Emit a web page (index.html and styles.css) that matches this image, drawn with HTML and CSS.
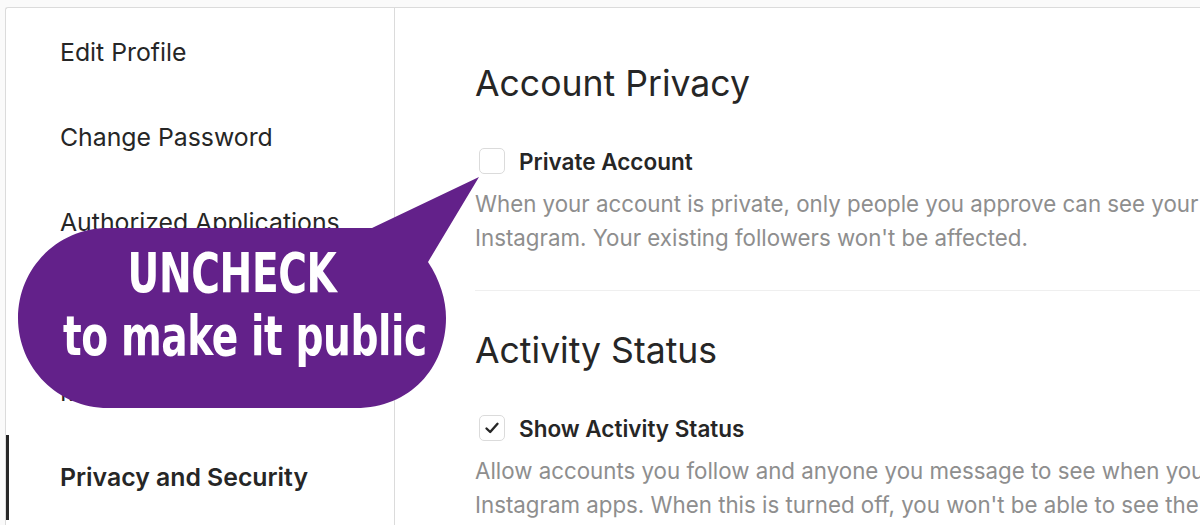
FILE: index.html
```html
<!DOCTYPE html>
<html>
<head>
    <meta charset="UTF-8">
    <title>Privacy and Security</title>
    <link rel="stylesheet" href="styles.css">
</head>
<body>
    <div class="page">
        <div class="card">
            <ul class="side">
                <li><a href="#">Edit Profile</a></li>
                <li><a href="#">Change Password</a></li>
                <li><a href="#">Authorized Applications</a></li>
                <li><a href="#">Email and SMS</a></li>
                <li><a href="#">Manage Contacts</a></li>
                <li><a href="#" class="active">Privacy and Security</a></li>
            </ul>
            <div class="main">
                <div class="section">
                    <h2>Account Privacy</h2>
                    <label class="check-row">
                        <span class="box"></span>
                        <span class="check-label">Private Account</span>
                    </label>
                    <p class="desc">When your account is private, only people you approve can see your photos and videos on Instagram. Your existing followers won't be affected.</p>
                </div>
                <div class="section">
                    <h2>Activity Status</h2>
                    <label class="check-row">
                        <span class="box checked">
                            <svg width="16" height="16" viewBox="0 0 16 16"><path d="M2.5 8.5 L6.2 12 L13.5 3.8" fill="none" stroke="#262626" stroke-width="2.4" stroke-linecap="round" stroke-linejoin="round"/></svg>
                        </span>
                        <span class="check-label">Show Activity Status</span>
                    </label>
                    <p class="desc">Allow accounts you follow and anyone you message to see when you were last active on Instagram apps. When this is turned off, you won't be able to see the activity status of other accounts.</p>
                </div>
            </div>
        </div>

        <!-- callout over the sidebar -->
        <div class="callout">
            <svg class="bubble" width="500" height="420" viewBox="0 0 500 420">
                <path d="M108 228 L372 228 L479 177 L428 262 C440 280 446 300 446 318 C446 368 410 408 356 408 L108 408 C58 408 18 368 18 318 C18 268 58 228 108 228 Z" fill="#63218a"/>
            </svg>
            <div class="callout-text">
                <div class="big">UNCHECK</div>
                <div class="big">to make it public</div>
            </div>
        </div>
    </div>
</body>
</html>
```

FILE: styles.css
```css
body {
    margin: 0;
    padding: 0;
    background-color: #fafafa;
    font-family: Inter, "Liberation Sans", Arial, sans-serif;
    color: #262626;
    overflow: hidden;
}

.page {
    position: relative;
    height: 525px;
    padding-top: 7px;
    box-sizing: border-box;
    overflow: hidden;
}

.card {
    display: flex;
    margin-left: 5px;
    height: 520px;
    background-color: #fff;
    border: 1px solid #dbdbdb;
    border-right: none;
    border-radius: 3px 0 0 0;
    overflow: hidden;
}

/* left menu */
.side {
    list-style: none;
    margin: 0;
    padding: 2px 0 0 0;
    width: 388px;
    flex-shrink: 0;
    border-right: 1px solid #dbdbdb;
}

.side a {
    display: block;
    padding: 29px 0 29px 51px;
    border-left: 3px solid transparent;
    font-size: 24.8px;
    line-height: 27px;
    color: #262626;
    text-decoration: none;
    white-space: nowrap;
}

.side a.active {
    border-left-color: #262626;
    font-weight: 600;
}

/* settings column */
.main {
    flex: 1;
    padding: 54px 0 0 80px;
    min-width: 0;
}

.section {
    padding-bottom: 35px;
    border-bottom: 1px solid #efefef;
    margin-bottom: 38px;
}

h2 {
    margin: 0 0 42px 0;
    font-size: 35.6px;
    line-height: 44px;
    font-weight: 400;
    color: #262626;
}

.check-row {
    display: flex;
    align-items: center;
    height: 26px;
    padding-left: 4px;
}

.box {
    width: 24px;
    height: 24px;
    border: 1px solid #dbdbdb;
    border-radius: 5px;
    display: flex;
    align-items: center;
    justify-content: center;
    margin-right: 14px;
}

.check-label {
    font-size: 22.5px;
    font-weight: 600;
    color: #262626;
    white-space: nowrap;
}

.desc {
    margin: 13px 0 0 0;
    font-size: 22.3px;
    line-height: 34px;
    color: #8e8e8e;
    width: 1000px;
}

/* purple speech bubble */
.callout {
    position: absolute;
    left: 0;
    top: 0;
    width: 500px;
    height: 420px;
}

.bubble {
    position: absolute;
    left: 0;
    top: 0;
}

.callout-text {
    position: absolute;
    left: 18px;
    top: 242px;
    width: 428px;
    text-align: center;
    color: #fff;
    transform: scaleX(0.79);
}

.big {
    font-family: "DejaVu Sans Condensed", "Liberation Sans Narrow", sans-serif;
    font-weight: bold;
    font-size: 55px;
    line-height: 63px;
    letter-spacing: -0.5px;
    white-space: nowrap;
}
```
